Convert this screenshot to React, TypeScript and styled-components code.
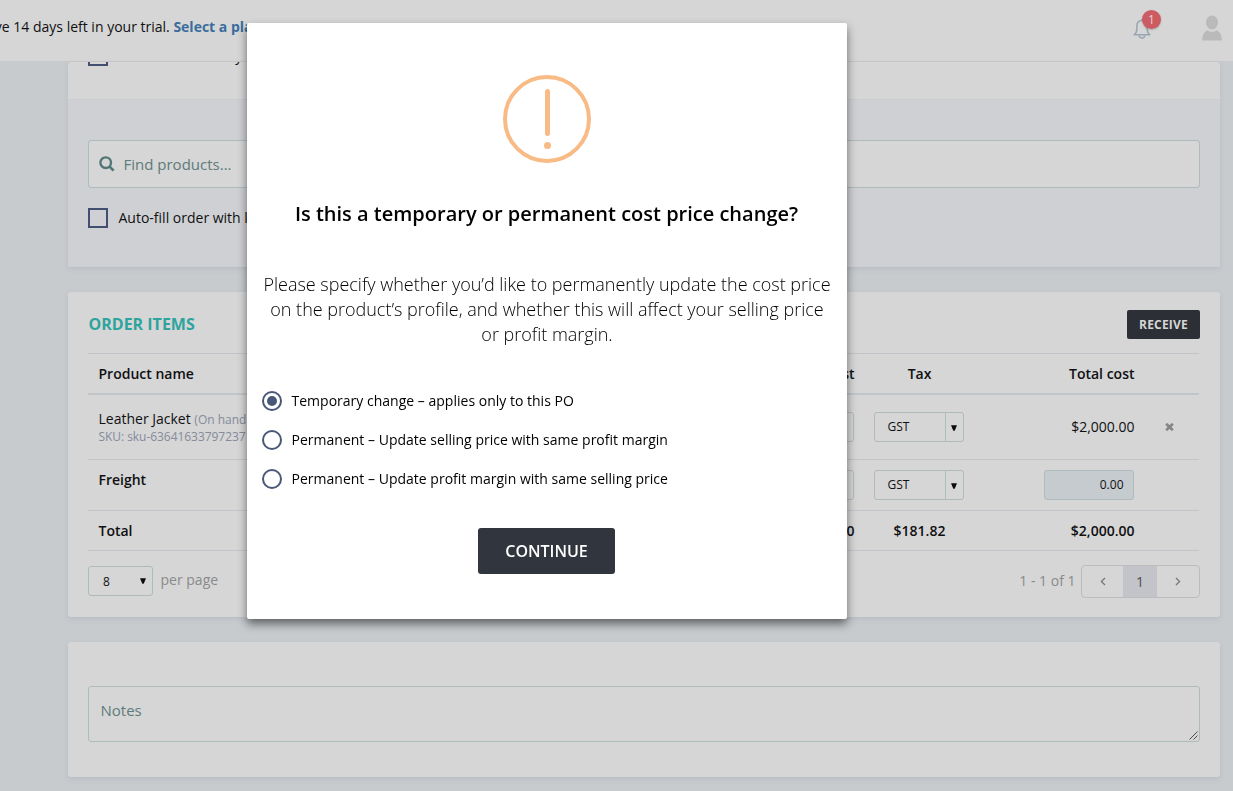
import React, { useState } from "react";
import styled, { createGlobalStyle, css } from "styled-components";

const GlobalStyle = createGlobalStyle`
  * { box-sizing: border-box; }
  html, body { margin: 0; height: 100%; overflow: hidden; background: #c7cbce; }
  body { font-family: "Open Sans", sans-serif; font-size: 14px; line-height: 20px; color: #101012; }
  button, input, textarea { font-family: inherit; }
`;

const Page = styled.div`
  display: flex;
  flex-direction: column;
  height: 791px;
  width: 1233px;
  overflow: hidden;
`;

const TopBar = styled.header`
  display: flex;
  align-items: center;
  flex: none;
  height: 62px;
  padding: 0 10px 8px 0;
  background: #d6d6d6;
  border-bottom: 1px solid #c9c9ca;
`;

const Trial = styled.div`
  margin-left: -50px;
  white-space: nowrap;
`;

const PlanLink = styled.a`
  color: #3a6d9d;
  font-weight: 700;
`;

const TopIcons = styled.div`
  display: flex;
  align-items: center;
  gap: 48px;
  margin-left: auto;
`;

const BellWrap = styled.div`
  position: relative;
  display: flex;
  width: 20px;
  height: 22px;
  margin-top: 4px;
`;

const Badge = styled.span`
  position: absolute;
  left: 9px;
  top: -8px;
  width: 19px;
  height: 19px;
  border-radius: 50%;
  background: #cd5c62;
  color: #e0d3d4;
  font-size: 12px;
  line-height: 19px;
  text-align: center;
  box-shadow: 0 1px 2px rgba(0, 0, 0, 0.2);
`;

const Avatar = styled.svg`
  margin-top: 2px;
`;

const Main = styled.main`
  display: flex;
  flex-direction: column;
  gap: 25px;
  padding-left: 68px;
  width: 1220px;
`;

const Card = styled.section<{ $h: number }>`
  flex: none;
  height: ${(p) => p.$h}px;
  background: #d6d6d6;
  border-radius: 3px;
  box-shadow: 0 2px 5px rgba(120, 120, 140, 0.16);
`;

const CardEnd = styled.div`
  display: flex;
  align-items: flex-end;
  height: 37px;
  padding: 0 20px 33px;
  overflow: hidden;
`;

const Finder = styled.div`
  height: 168px;
  padding: 40px 20px 0;
  background: #cfd0d3;
  border-top: 1px solid #cbccd0;
  border-radius: 3px;
`;

const SearchField = styled.div`
  display: flex;
  align-items: center;
  gap: 9px;
  height: 48px;
  padding: 0 9.5px;
  border: 1px solid #adbcbb;
  border-radius: 3px;
  background: #d6d6d6;
  color: #5d7b7b;
  font-size: 15px;
`;

const CheckRow = styled.label`
  display: flex;
  align-items: center;
  gap: 10.5px;
  height: 20px;
  margin-top: 20px;
  white-space: nowrap;
`;

const CheckBox = styled.span`
  width: 20px;
  height: 20px;
  border: 2px solid #424f70;
`;

const ItemsHead = styled.div`
  display: flex;
  align-items: center;
  justify-content: space-between;
  height: 61px;
  padding: 4px 20px 0;
`;

const Heading = styled.h2`
  margin: 0 0 2px 0.5px;
  color: #2ea49e;
  font-size: 16px;
  font-weight: 700;
`;

const ReceiveButton = styled.button`
  width: 73px;
  height: 29px;
  padding: 0;
  border: 0;
  border-radius: 2px;
  background: #2c3036;
  color: #d6d6d6;
  font-size: 12px;
  font-weight: 700;
  letter-spacing: 0.2px;
`;

const Table = styled.div`
  margin: 0 21px 0 20px;
  border-top: 1px solid #c1c3c8;
`;

const Row = styled.div<{ $h: number; $thick?: boolean; $bold?: boolean }>`
  display: grid;
  grid-template-columns: 1fr 90px 110px 170px 65px;
  align-items: center;
  height: ${(p) => p.$h}px;
  padding-left: 10.5px;
  border-bottom: ${(p) => (p.$thick ? 2 : 1)}px solid #c1c5ca;
  ${(p) => p.$bold && css`font-weight: 600;`}
`;

const Name = styled.div<{ $raise?: number }>`
  white-space: nowrap;
  padding-bottom: ${(p) => p.$raise ?? 0}px;
`;

const Small = styled.span`
  color: #848b9a;
  font-size: 12px;
`;

const Sku = styled.div`
  color: #848b9a;
  font-size: 12px;
  line-height: 14px;
  letter-spacing: -0.05px;
`;

const FieldCell = styled.div`
  display: flex;
  justify-content: flex-end;
`;

const RightCell = styled(FieldCell)`
  margin-right: -0.5px;
`;

const TaxCell = styled.div`
  display: flex;
  justify-content: center;
  padding-left: 20px;
`;

const TaxText = styled.span`
  margin-left: 1px;
`;

const RemoveCell = styled.div`
  display: flex;
  padding-left: 31px;
`;

const Field = styled.div<{ $filled?: boolean }>`
  display: flex;
  align-items: center;
  justify-content: flex-end;
  width: 90px;
  height: 30px;
  padding-right: 9.5px;
  border: 1px solid #adbcbb;
  border-radius: 3px;
  background: ${(p) => (p.$filled ? "#c6cbcf" : "#d6d6d6")};
  font-size: 12px;
  font-weight: 500;
`;

const Select = styled.div<{ $w: number; $split?: boolean; $left: number; $arrow: number }>`
  display: flex;
  justify-content: space-between;
  align-items: center;
  width: ${(p) => p.$w}px;
  height: 30px;
  padding-left: ${(p) => p.$left}px;
  border: 1px solid #adbcbb;
  border-radius: 3px;
  color: #101012;
  font-size: 12px;
  font-weight: 400;

  > span:last-child {
    display: flex;
    align-items: center;
    justify-content: center;
    width: ${(p) => p.$arrow}px;
    height: 100%;
    ${(p) => p.$split && css`
      border-left: 1px solid #adbcbb;
      padding: 2px 1px 0 0;
    `}
  }
`;

const PageSize = styled.span`
  padding-top: 2px;
`;

const Footer = styled.div`
  display: flex;
  align-items: center;
  justify-content: space-between;
  height: 61px;
  padding: 0 20px;
  color: #8a8a8b;
`;

const FooterGroup = styled.div<{ $gap: number; $lift?: number }>`
  display: flex;
  align-items: center;
  gap: ${(p) => p.$gap}px;
  padding-bottom: ${(p) => p.$lift ?? 0}px;
`;

const FooterText = styled.span<{ $drop?: number }>`
  padding-bottom: ${(p) => 2 - (p.$drop ?? 0)}px;
`;

const Pager = styled.div`
  display: flex;
  width: 119px;
  height: 33px;
  border: 1px solid #bcbcbe;
  border-radius: 4px;
`;

const PageCell = styled.span<{ $active?: boolean; $w: number }>`
  display: flex;
  align-items: center;
  justify-content: center;
  width: ${(p) => p.$w}px;
  background: ${(p) => (p.$active ? "#c3c4c9" : "transparent")};
  color: #4e4e52;
`;

const NotesArea = styled.div`
  display: flex;
  justify-content: space-between;
  height: 56px;
  margin: 0 20px;
  padding: 13px 1px 1px 11.5px;
  border: 1px solid #adbcbb;
  border-radius: 3px;
  color: #5d7b7b;
  font-size: 15px;

  svg { align-self: flex-end; }
`;

const NotesCard = styled(Card)`
  padding-top: 44px;
`;

const Backdrop = styled.div`
  position: fixed;
  inset: 0;
  display: flex;
  align-items: flex-start;
  padding: 23px 0 0 247px;
`;

const Dialog = styled.div`
  display: flex;
  flex-direction: column;
  align-items: center;
  width: 600px;
  height: 596px;
  padding: 52px 15px 0;
  border-radius: 2px;
  background: #fff;
  color: #000;
  box-shadow: 0 5px 10px rgba(0, 0, 0, 0.5);
`;

const DialogTitle = styled.h1`
  margin: 36px 1px 0 0;
  font-size: 20px;
  line-height: 30px;
  font-weight: 600;
  white-space: nowrap;
`;

const DialogText = styled.p`
  margin: 43px -5px 0;
  font-size: 18px;
  line-height: 25px;
  font-weight: 300;
  letter-spacing: -0.01px;
  text-align: center;
  white-space: nowrap;
`;

const Options = styled.div`
  display: flex;
  flex-direction: column;
  align-self: stretch;
  gap: 19px;
  margin-top: 44px;
`;

const Option = styled.label`
  display: flex;
  align-items: center;
  gap: 9.5px;
  height: 20px;
  letter-spacing: 0.01px;
`;

const Radio = styled.span<{ $on: boolean }>`
  display: flex;
  align-items: center;
  justify-content: center;
  width: 20px;
  height: 20px;
  border: 2px solid #4a5878;
  border-radius: 50%;

  &::after {
    content: "";
    width: 10px;
    height: 10px;
    border-radius: 50%;
    background: ${(p) => (p.$on ? "#4a5878" : "transparent")};
  }
`;

const ContinueButton = styled.button`
  width: 137px;
  height: 46px;
  margin: 39px 1px 0 0;
  padding: 0;
  border: 0;
  border-radius: 3px;
  background: #31353d;
  color: #fff;
  font-size: 16px;
  font-weight: 600;
`;

const Arrow = () => (
  <svg width="6" height="6" viewBox="0 0 6 6">
    <path d="M0 .3h6L3.7 5.8H2.3z" fill="#0c0c0c" />
  </svg>
);

const Chevron = ({ flip }: { flip?: boolean }) => (
  <svg width="6" height="9" viewBox="0 0 6 9" fill="none" stroke="#77777a" strokeWidth="1.3">
    <path d={flip ? "M1 1l3.6 3.5L1 8" : "M5 1L1.4 4.5 5 8"} />
  </svg>
);

const TaxSelect = () => (
  <Select $w={90} $left={12.5} $arrow={18} $split>
    <span>GST</span>
    <span><Arrow /></span>
  </Select>
);

const choices = [
  "Temporary change – applies only to this PO",
  "Permanent – Update selling price with same profit margin",
  "Permanent – Update profit margin with same selling price",
];

export default function App() {
  const [choice, setChoice] = useState(0);
  return (
    <>
      <GlobalStyle />
      <Page>
        <TopBar>
          <Trial>
            You have 14 days left in your trial. <PlanLink>Select a plan</PlanLink>
          </Trial>
          <TopIcons>
            <BellWrap>
              <svg width="20" height="22" viewBox="0 0 20 22" fill="none" stroke="#98a5b2" strokeWidth="1.5">
                <path d="M1.2 16.8h15.6c-2-1.700-2.700-3.400-2.700-6.300V7.800C14.100 4.500 12.100 2.500 9 2.500S3.900 4.500 3.900 7.800v2.700c0 2.900-.7 4.600-2.700 6.300z" strokeLinejoin="round" />
                <path d="M6.200 17.500c.2 1.700 1.200 2.600 2.800 2.600s2.600-.9 2.800-2.600" />
                <path d="M9 2.500V1" />
              </svg>
              <Badge>1</Badge>
            </BellWrap>
            <Avatar width="22" height="26" viewBox="0 0 22 26" fill="#bababa">
              <ellipse cx="11" cy="7.500" rx="6" ry="7" />
              <path d="M1 25.500c.3-5 1.900-8.600 5.300-10.200 2.800 2 6.600 2 9.400 0 3.400 1.600 5 5.200 5.300 10.200z" />
            </Avatar>
          </TopIcons>
        </TopBar>

        <Main>
          <Card $h={205}>
            <CardEnd>
              <CheckRow>
                <CheckBox />
                <span>Available inventory</span>
              </CheckRow>
            </CardEnd>
            <Finder>
              <SearchField>
                <svg width="16" height="16" viewBox="0 0 16 16" fill="none" stroke="#507676">
                  <circle cx="6.700" cy="6.700" r="5.300" strokeWidth="2.400" />
                  <path d="M10.600 10.600l4 4" strokeWidth="2.700" />
                </svg>
                <span>Find products...</span>
              </SearchField>
              <CheckRow>
                <CheckBox />
                <span>Auto-fill order with low stock</span>
              </CheckRow>
            </Finder>
          </Card>

          <Card $h={325}>
            <ItemsHead>
              <Heading>ORDER ITEMS</Heading>
              <ReceiveButton>RECEIVE</ReceiveButton>
            </ItemsHead>
            <Table>
              <Row $h={41} $thick $bold>
                <Name>Product name</Name>
                <RightCell>Cost</RightCell>
                <TaxCell><TaxText>Tax</TaxText></TaxCell>
                <RightCell>Total cost</RightCell>
              </Row>
              <Row $h={65}>
                <Name $raise={2}>
                  Leather Jacket <Small>(On hand: 10)</Small>
                  <Sku>SKU: sku-63641633797237</Sku>
                </Name>
                <Field />
                <TaxCell><TaxSelect /></TaxCell>
                <RightCell>$2,000.00</RightCell>
                <RemoveCell>
                  <svg width="9" height="8" viewBox="0 0 9 8" stroke="#858588" strokeWidth="2.700">
                    <path d="M1.200 .8l6.600 6.400M7.800 .8L1.200 7.200" />
                  </svg>
                </RemoveCell>
              </Row>
              <Row $h={51} $bold>
                <Name $raise={10}>Freight</Name>
                <Field />
                <TaxCell><TaxSelect /></TaxCell>
                <FieldCell><Field $filled>0.00</Field></FieldCell>
              </Row>
              <Row $h={40} $bold>
                <Name>Total</Name>
                <RightCell>$2,000.00</RightCell>
                <TaxCell><TaxText>$181.82</TaxText></TaxCell>
                <RightCell>$2,000.00</RightCell>
              </Row>
            </Table>
            <Footer>
              <FooterGroup $gap={7.5} $lift={2}>
                <Select $w={65} $left={14} $arrow={18}>
                  <PageSize>8</PageSize>
                  <span><Arrow /></span>
                </Select>
                <FooterText>per page</FooterText>
              </FooterGroup>
              <FooterGroup $gap={5.5}>
                <FooterText>1 - 1 of 1</FooterText>
                <Pager>
                  <PageCell $w={41}><Chevron /></PageCell>
                  <PageCell $w={34} $active>1</PageCell>
                  <PageCell $w={42}><Chevron flip /></PageCell>
                </Pager>
              </FooterGroup>
            </Footer>
          </Card>

          <NotesCard $h={135}>
            <NotesArea>
              <span>Notes</span>
              <svg width="9" height="9" viewBox="0 0 9 9" stroke="#4c4c4c" strokeWidth="1">
                <path d="M.5 8.500l8-8M4.500 8.500l4-4" />
              </svg>
            </NotesArea>
          </NotesCard>
        </Main>
      </Page>

      <Backdrop>
        <Dialog role="dialog">
          <svg width="88" height="88" viewBox="0 0 88 88" fill="none" stroke="#f8bb86">
            <circle cx="44" cy="44" r="42" strokeWidth="4" />
            <path d="M44.500 16.500v42" strokeWidth="5" strokeLinecap="round" />
            <circle cx="44.500" cy="70.500" r="3.500" fill="#f8bb86" stroke="none" />
          </svg>
          <DialogTitle>Is this a temporary or permanent cost price change?</DialogTitle>
          <DialogText>
            Please specify whether you’d like to permanently update the cost price
            <br />
            on the product’s profile, and whether this will affect your selling price
            <br />
            or profit margin.
          </DialogText>
          <Options>
            {choices.map((label, i) => (
              <Option key={label} onClick={() => setChoice(i)}>
                <Radio $on={choice === i} />
                <span>{label}</span>
              </Option>
            ))}
          </Options>
          <ContinueButton>CONTINUE</ContinueButton>
        </Dialog>
      </Backdrop>
    </>
  );
}
